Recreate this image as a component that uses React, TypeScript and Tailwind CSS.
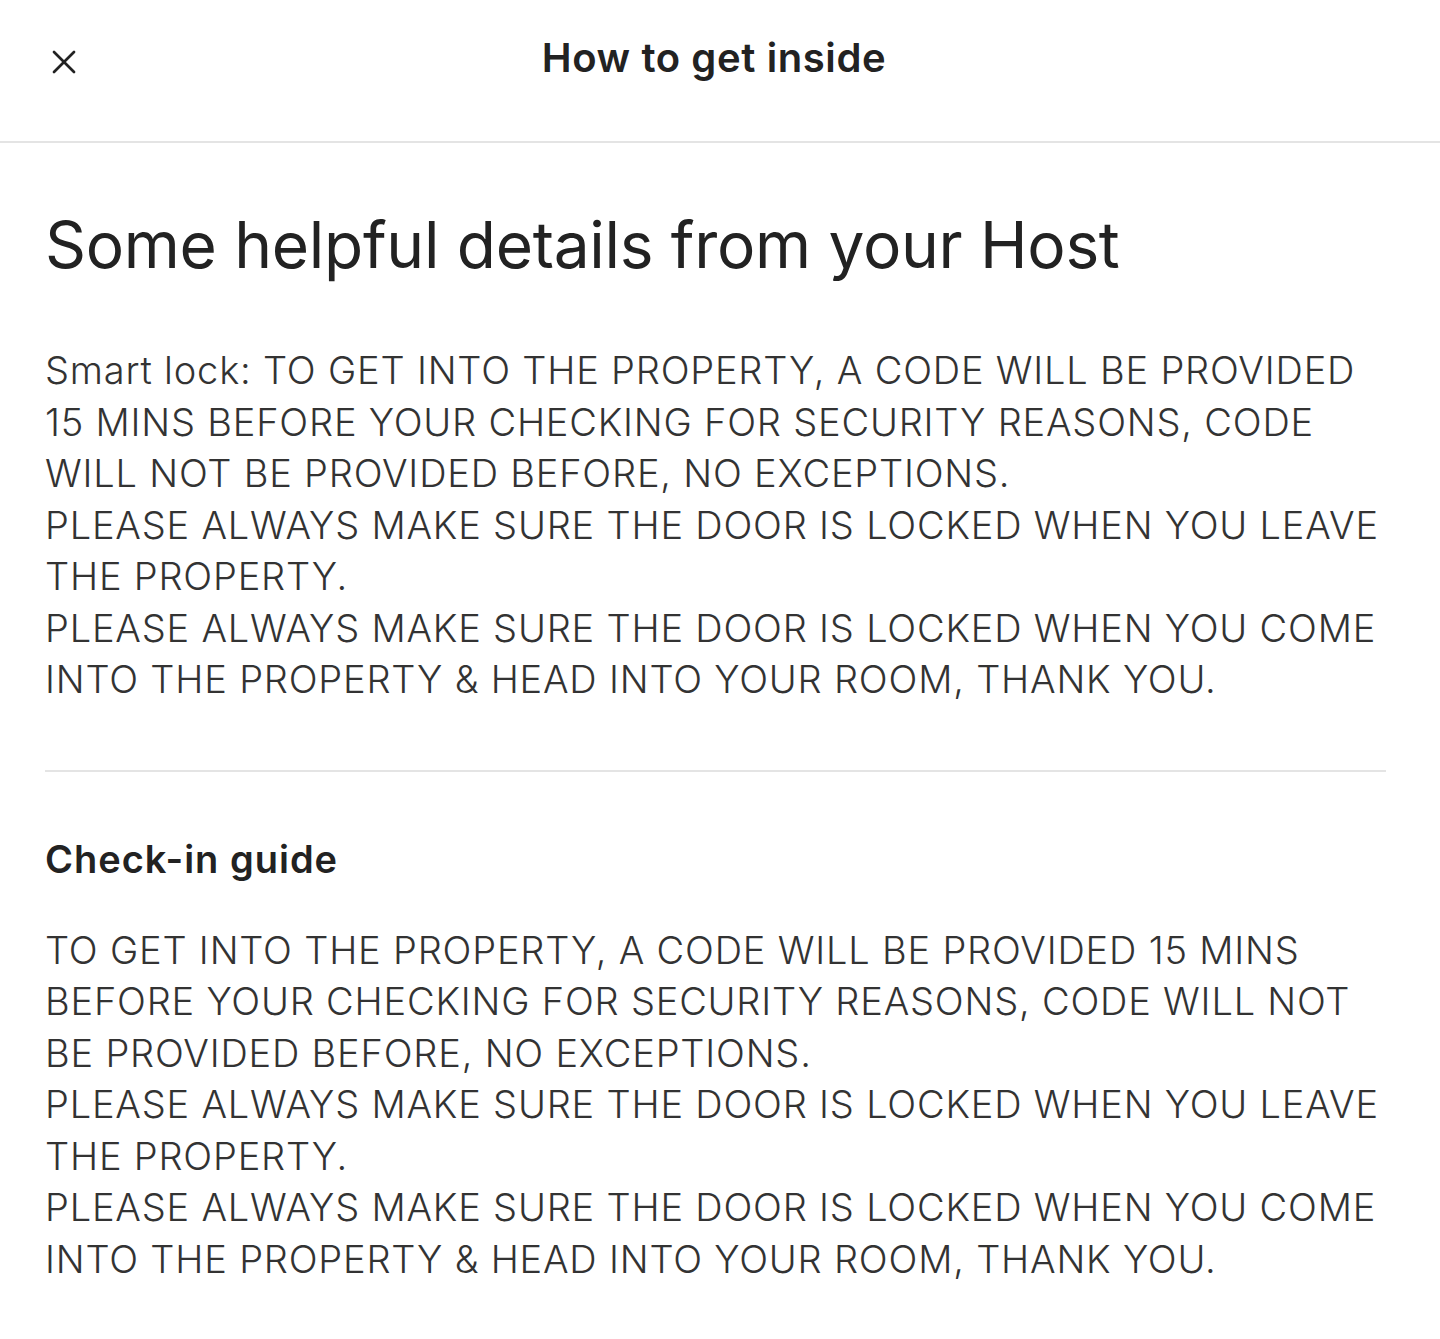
import { X } from 'lucide-react';

const bodyLines = {
  smartLock: [
    'Smart lock: TO GET INTO THE PROPERTY, A CODE WILL BE PROVIDED',
    '15 MINS BEFORE YOUR CHECKING FOR SECURITY REASONS, CODE',
    'WILL NOT BE PROVIDED BEFORE, NO EXCEPTIONS.',
    'PLEASE ALWAYS MAKE SURE THE DOOR IS LOCKED WHEN YOU LEAVE',
    'THE PROPERTY.',
    'PLEASE ALWAYS MAKE SURE THE DOOR IS LOCKED WHEN YOU COME',
    'INTO THE PROPERTY & HEAD INTO YOUR ROOM, THANK YOU.',
  ],
  guide: [
    'TO GET INTO THE PROPERTY, A CODE WILL BE PROVIDED 15 MINS',
    'BEFORE YOUR CHECKING FOR SECURITY REASONS, CODE WILL NOT',
    'BE PROVIDED BEFORE, NO EXCEPTIONS.',
    'PLEASE ALWAYS MAKE SURE THE DOOR IS LOCKED WHEN YOU LEAVE',
    'THE PROPERTY.',
    'PLEASE ALWAYS MAKE SURE THE DOOR IS LOCKED WHEN YOU COME',
    'INTO THE PROPERTY & HEAD INTO YOUR ROOM, THANK YOU.',
  ],
};

function Paragraph({ lines }: { lines: string[] }) {
  return (
    <div className="text-[38px] leading-[51.5px] text-[#333] font-light tracking-[0.8px]">
      {lines.map((line) => (
        <div key={line} className="whitespace-nowrap">
          {line}
        </div>
      ))}
    </div>
  );
}

export default function App() {
  return (
    <div className="min-h-[1339px] bg-white font-['Inter',sans-serif] text-[#222]">
      <header className="relative flex h-[143px] items-center justify-center border-b-2 border-[#e4e4e4] pb-[26px] pr-[12px]">
        <button className="absolute left-[44px] top-[42px] text-[#222]">
          <X className="h-[40px] w-[40px]" strokeWidth={1.6} />
        </button>
        <h1 className="text-[40px] font-semibold tracking-[0.6px]">How to get inside</h1>
      </header>

      <main className="pl-[45px] pr-[54px] pt-[66px]">
        <h2 className="text-[64px] leading-[72px] font-normal tracking-[-0.3px] text-[#222]">
          Some helpful details from your Host
        </h2>

        <div className="mt-[64px]">
          <Paragraph lines={bodyLines.smartLock} />
        </div>

        <div className="mt-[64px] border-t-2 border-[#e4e4e4]" />

        <h3 className="mt-[63px] text-[38px] leading-[48px] font-semibold tracking-[1px] text-[#222]">
          Check-in guide
        </h3>

        <div className="mt-[42px]">
          <Paragraph lines={bodyLines.guide} />
        </div>
      </main>
    </div>
  );
}
